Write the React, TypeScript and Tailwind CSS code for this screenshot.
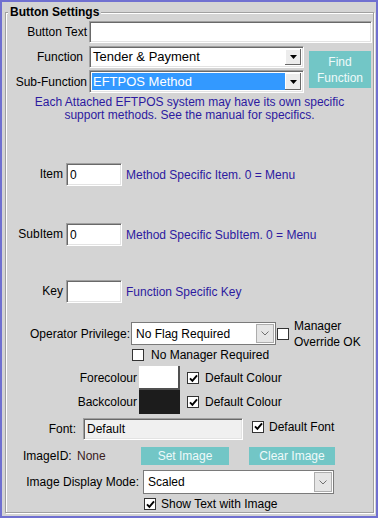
import React from 'react';

// ── Bits ──────────────────────────────────────────────────────────────────────
const SUNKEN =
  'border border-t-[#a0a0a0] border-l-[#a0a0a0] border-r-white border-b-white shadow-[inset_1px_1px_0_#696969,inset_-1px_-1px_0_#e3e3e3]';

function Check({ checked = false }: { checked?: boolean }) {
  return (
    <span className="flex h-[12px] w-[12px] shrink-0 items-center justify-center border border-[#333333] bg-white">
      {checked && (
        <svg width="9" height="9" viewBox="0 0 9 9">
          <path d="M1 4.3 L3.4 6.8 L8 1.3" fill="none" stroke="#000" strokeWidth="1.9" />
        </svg>
      )}
    </span>
  );
}

function ClassicArrow() {
  return (
    <div className="flex h-full w-[16px] shrink-0 items-center justify-center bg-[#ececec] shadow-[inset_-1px_-1px_0_#696969,inset_1px_1px_0_#ffffff]">
      <svg width="7" height="4" viewBox="0 0 7 4">
        <path d="M0 0 H7 L3.5 4 Z" fill="#000" />
      </svg>
    </div>
  );
}

function Chevron() {
  return (
    <div className="flex h-full w-[18px] shrink-0 items-center justify-center border border-[#adadad] bg-[#e5e5e5]">
      <svg width="8" height="5" viewBox="0 0 8 5">
        <path d="M0.5 0.5 L4 4 L7.5 0.5" fill="none" stroke="#707070" />
      </svg>
    </div>
  );
}

function TealButton({ children, className }: { children: React.ReactNode; className: string }) {
  return (
    <div className={`flex items-center justify-center bg-[#72c6c6] text-center text-[#eefafa] ${className}`}>
      {children}
    </div>
  );
}

function SmallRow({ label, value, desc }: { label: string; value: string; desc: string }) {
  return (
    <div className="flex h-[23px] items-center">
      <span className="mb-[2px] w-[57px] text-right">{label}</span>
      <div className={`ml-[3px] flex h-[23px] w-[56px] items-center bg-white pl-[3px] ${SUNKEN}`}>{value}</div>
      <span className="ml-[4px] text-[#2c1aa0]">{desc}</span>
    </div>
  );
}

// ── Page ──────────────────────────────────────────────────────────────────────
export default function App() {
  return (
    <div className="h-[518px] w-[378px] border-2 border-[#7070d0] bg-[#d4d4d4] font-['Liberation_Sans',Arial,sans-serif] text-[12px] leading-[14px] text-black">
      <div className="ml-[3px] mt-[10px] h-[501px] w-[369px] border border-[#a0a0a0] shadow-[1px_1px_0_#ffffff,inset_1px_1px_0_#ffffff]">
        <div className="-mt-[8px] ml-[2px] w-fit bg-[#d4d4d4] px-[2px] font-bold">Button Settings</div>

        {/* Button text */}
        <div className="mt-[2px] flex h-[22px] items-center">
          <span className="w-[81px] text-right">Button Text</span>
          <div className={`ml-[2px] h-[22px] w-[283px] bg-white ${SUNKEN}`} />
        </div>

        {/* Function / Sub-Function */}
        <div className="mt-[3px] flex">
          <div className="flex flex-col gap-[2px]">
            <div className="flex h-[22px] items-center">
              <span className="w-[81px] pr-[4px] text-right">Function</span>
              <div className={`ml-[2px] flex h-[22px] w-[215px] items-stretch bg-white p-[2px] text-[13px] ${SUNKEN}`}>
                <span className="flex flex-1 items-center pl-[1px]">Tender &amp; Payment</span>
                <ClassicArrow />
              </div>
            </div>
            <div className="flex h-[23px] items-center">
              <span className="w-[81px] text-right">Sub-Function</span>
              <div className={`ml-[2px] flex h-[23px] w-[215px] items-stretch bg-white p-[2px] text-[13px] ${SUNKEN}`}>
                <span className="flex flex-1 items-center bg-[#3399ff] pl-[1px] text-white">EFTPOS Method</span>
                <ClassicArrow />
              </div>
            </div>
          </div>
          <TealButton className="ml-[5px] mt-[5px] h-[37px] w-[62px] leading-[16px]">
            Find
            <br />
            Function
          </TealButton>
        </div>

        {/* Info */}
        <p className="mt-[3px] text-center leading-[13px] text-[#2c1aa0]">
          Each Attached EFTPOS system may have its own specific
          <br />
          support methods. See the manual for specifics.
        </p>

        <div className="mt-[41px]">
          <SmallRow label="Item" value="0" desc="Method Specific Item. 0 = Menu" />
        </div>
        <div className="mt-[37px]">
          <SmallRow label="SubItem" value="0" desc="Method Specific SubItem. 0 = Menu" />
        </div>
        <div className="mt-[34px]">
          <SmallRow label="Key" value="" desc="Function Specific Key" />
        </div>

        {/* Operator privilege */}
        <div className="mt-[19px] flex h-[23px] items-center">
          <span className="w-[124px] text-right">Operator Privilege:</span>
          <div className="ml-[1px] flex h-[23px] w-[145px] items-stretch border border-[#7a7a7a] bg-white p-[1px]">
            <span className="flex flex-1 items-center pl-[3px]">No Flag Required</span>
            <Chevron />
          </div>
          <div className="ml-[1px]">
            <Check />
          </div>
          <span className="ml-[5px] leading-[16px]">
            Manager
            <br />
            Override OK
          </span>
        </div>
        <div className="mt-[3px] flex h-[13px] items-center pl-[126px]">
          <Check />
          <span className="ml-[7px]">No Manager Required</span>
        </div>

        {/* Colours */}
        <div className="mt-[5px] flex h-[24px] items-center">
          <span className="w-[131px] text-right">Forecolour</span>
          <div className="ml-[2px] h-[24px] w-[41px] border-b-2 border-r-2 border-[#505050] bg-white" />
          <div className="ml-[7px]">
            <Check checked />
          </div>
          <span className="ml-[6px]">Default Colour</span>
        </div>
        <div className="flex h-[24px] items-center">
          <span className="w-[131px] text-right">Backcolour</span>
          <div className="ml-[2px] h-[24px] w-[41px] bg-[#1c1c1c]" />
          <div className="ml-[7px]">
            <Check checked />
          </div>
          <span className="ml-[6px]">Default Colour</span>
        </div>

        {/* Font */}
        <div className="mt-[4px] flex h-[22px] items-center">
          <span className="w-[70px] text-right">Font:</span>
          <div className={`ml-[7px] flex h-[22px] w-[160px] items-center bg-[#f0f0f0] pl-[3px] ${SUNKEN}`}>Default</div>
          <div className="mb-[5px] ml-[9px] flex items-center">
            <Check checked />
            <span className="ml-[5px]">Default Font</span>
          </div>
        </div>

        {/* Image */}
        <div className="mt-[7px] flex h-[18px] items-center">
          <span className="w-[71px] pl-[17px]">ImageID:</span>
          <span className="w-[64px] text-[#3a1c1c]">None</span>
          <TealButton className="h-[18px] w-[88px]">Set Image</TealButton>
          <TealButton className="ml-[20px] h-[18px] w-[86px]">Clear Image</TealButton>
        </div>

        <div className="mt-[5px] flex h-[24px] items-center">
          <span className="w-[133px] text-right">Image Display Mode:</span>
          <div className="ml-[4px] flex h-[24px] w-[191px] items-stretch border border-[#7a7a7a] bg-white p-[1px]">
            <span className="flex flex-1 items-center pl-[3px]">Scaled</span>
            <Chevron />
          </div>
        </div>
        <div className="mt-[4px] flex h-[12px] items-center pl-[138px]">
          <Check checked />
          <span className="ml-[5px]">Show Text with Image</span>
        </div>
      </div>
    </div>
  );
}
